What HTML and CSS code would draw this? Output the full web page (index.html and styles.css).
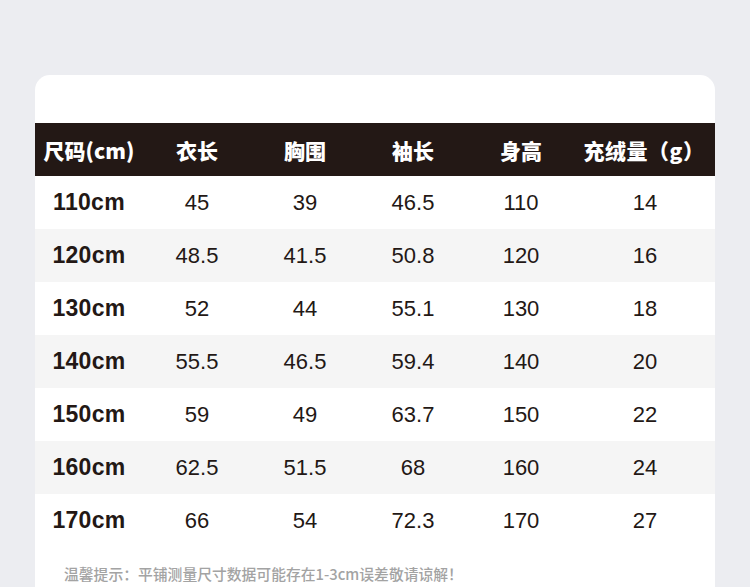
FILE: index.html
```html
<!DOCTYPE html>
<html lang="zh">
<head>
<meta charset="utf-8">
<link rel="stylesheet" href="styles.css">
</head>
<body>
<div class="card">
  <div class="table">
    <div class="row head">
      <div>尺码(cm)</div><div>衣长</div><div>胸围</div><div>袖长</div><div>身高</div><div class="wide">充绒量（g）</div>
    </div>
    <div class="row"><div class="size">110cm</div><div>45</div><div>39</div><div>46.5</div><div>110</div><div>14</div></div>
    <div class="row alt"><div class="size">120cm</div><div>48.5</div><div>41.5</div><div>50.8</div><div>120</div><div>16</div></div>
    <div class="row"><div class="size">130cm</div><div>52</div><div>44</div><div>55.1</div><div>130</div><div>18</div></div>
    <div class="row alt"><div class="size">140cm</div><div>55.5</div><div>46.5</div><div>59.4</div><div>140</div><div>20</div></div>
    <div class="row"><div class="size">150cm</div><div>59</div><div>49</div><div>63.7</div><div>150</div><div>22</div></div>
    <div class="row alt"><div class="size">160cm</div><div>62.5</div><div>51.5</div><div>68</div><div>160</div><div>24</div></div>
    <div class="row"><div class="size">170cm</div><div>66</div><div>54</div><div>72.3</div><div>170</div><div>27</div></div>
  </div>
  <p class="note">温馨提示：平铺测量尺寸数据可能存在1-3cm误差敬请谅解！</p>
</div>
</body>
</html>
```
FILE: styles.css
```css
html, body {
  margin: 0;
  padding: 0;
}
body {
  background: #ecedf1;
  padding-top: 75px;
  height: 587px;
  box-sizing: border-box;
  overflow: hidden;
}
.card {
  margin: 0 35px;
  background: #ffffff;
  border-radius: 15px 15px 0 0;
  padding-top: 48px;
  height: 512px;
  box-sizing: border-box;
}
.row {
  display: grid;
  grid-template-columns: 108px 108px 108px 108px 108px 140px;
  height: 53px;
  align-items: center;
  text-align: center;
  font-family: "Liberation Sans", Arial, sans-serif;
  font-size: 22px;
  color: #231815;
  background: #ffffff;
}
.row.alt {
  background: #f5f5f5;
}
.row.head {
  background: #231815;
  color: #ffffff;
  font-family: "Noto Sans CJK SC", "Noto Sans", sans-serif;
  font-weight: 900;
  font-size: 21px;
}
.row.head .wide {
  padding-right: 2px;
  letter-spacing: 0.5px;
}
.size {
  font-weight: 700;
  font-size: 23px;
  letter-spacing: 0.3px;
}
.note {
  margin: 0;
  padding: 17px 0 0 29px;
  font-family: "Noto Sans CJK SC", sans-serif;
  font-weight: 500;
  font-size: 14.8px;
  line-height: 20px;
  color: #a3a3a3;
}
```
